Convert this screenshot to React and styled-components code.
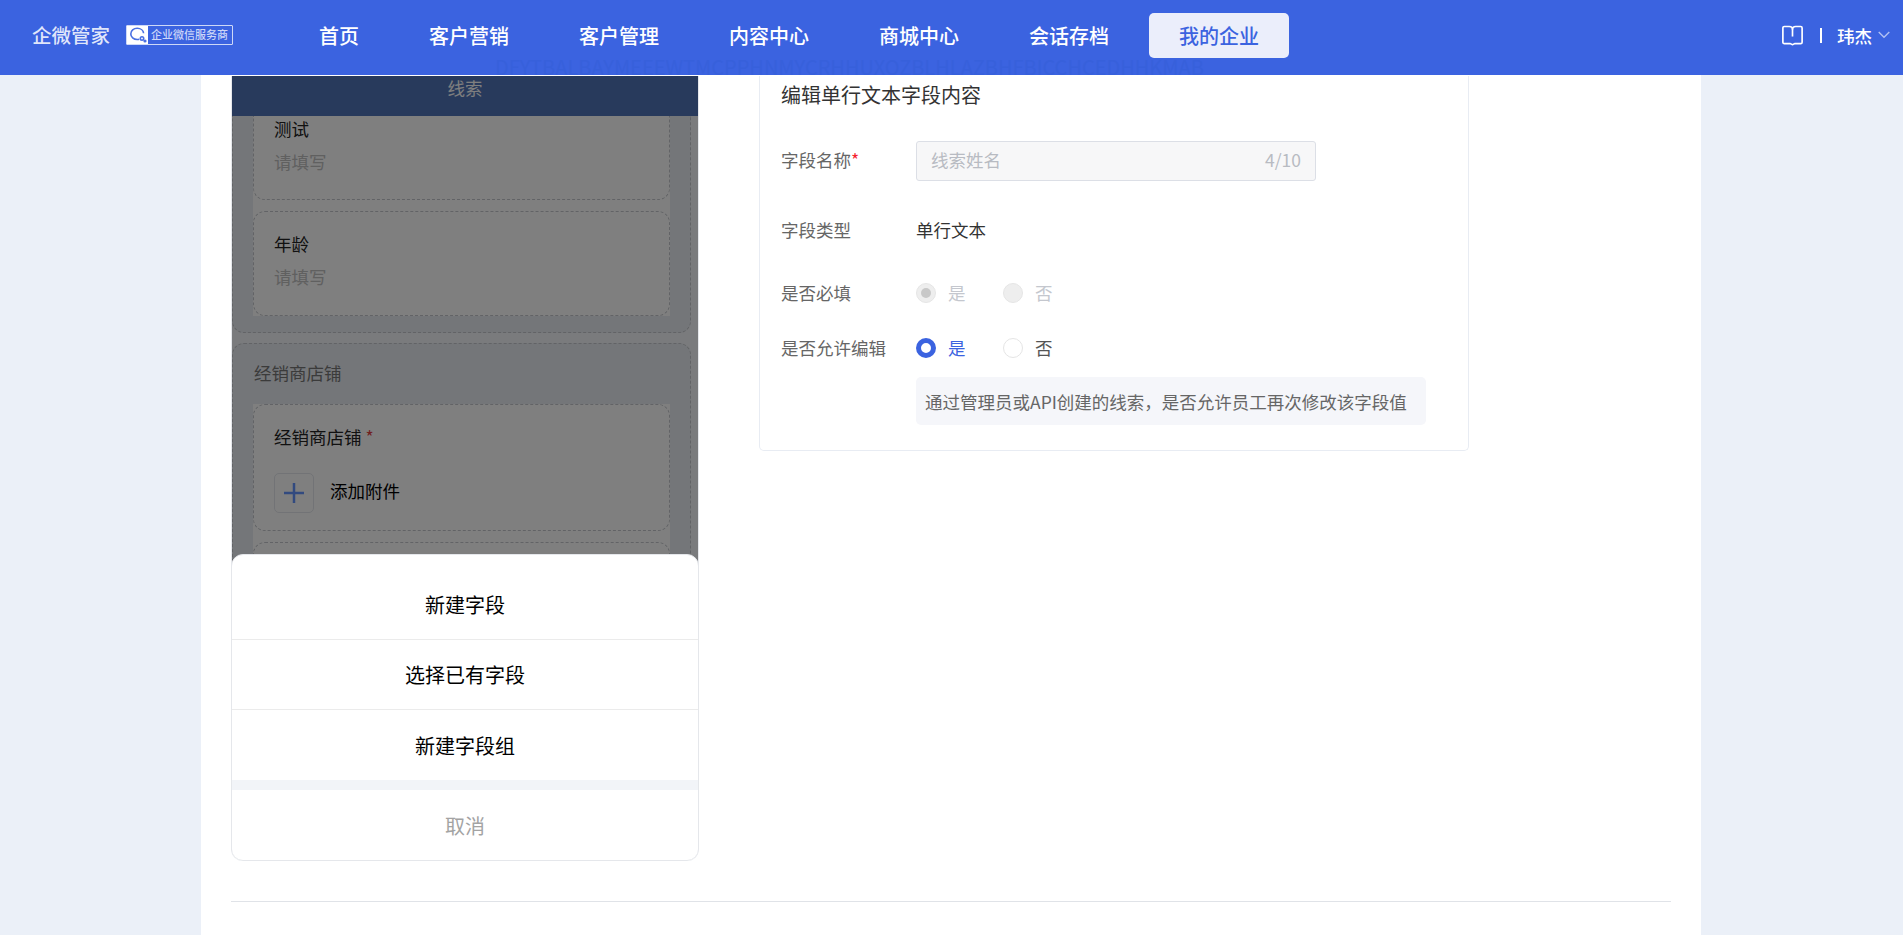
import React from "react";
import styled, { createGlobalStyle } from "styled-components";

const Global = createGlobalStyle`
  html, body { margin: 0; padding: 0; height: 100%; overflow: hidden; }
  body { background: #ebf0f8; font-family: "Noto Sans CJK SC", "Noto Sans", sans-serif; font-size: 17.5px; color: #333; }
  * { box-sizing: border-box; }
`;

const Header = styled.header`
  height: 75px; background: #3b63e0; display: flex; align-items: flex-start; position: relative; overflow: hidden;
`;
const Brand = styled.div`
  display: flex; align-items: center; height: 70px; padding-left: 32px; width: 289px; flex: none;
`;
const BrandName = styled.span`
  font-size: 19.5px; font-weight: 500; color: rgba(255,255,255,.85); line-height: 1; margin-right: 16px;
`;
const Badge = styled.div`
  display: flex; width: 107px; height: 20px; border: 1.5px solid rgba(255,255,255,.75); border-radius: 1px; overflow: hidden;
`;
const BadgeIcon = styled.div`
  width: 21px; background: #fff; display: flex; align-items: center; justify-content: center; flex: none;
`;
const BadgeText = styled.span`
  font-size: 11px; font-weight: 500; line-height: 17px; color: #ccd6f8; padding-left: 3px; white-space: nowrap;
`;
const Nav = styled.nav`
  display: flex; gap: 10px; padding-top: 13px;
`;
const NavItem = styled.a`
  height: 45px; padding: 0 30px; border-radius: 5px; display: flex; align-items: center; font-size: 20px; font-weight: 500;
  color: ${p => (p.$active ? "#3b63e0" : "#fff")};
  background: ${p => (p.$active ? "#ebeefb" : "transparent")};
`;
const UserArea = styled.div`
  margin-left: auto; display: flex; align-items: center; height: 70px; padding-right: 13px; color: #fff;
`;
const Sep = styled.i`
  width: 2px; height: 15px; background: #fff; margin: 0 15px 0 16px;
`;
const UserName = styled.span`
  font-size: 17.5px; font-weight: 500; margin-right: 6px;
`;
const Watermark = styled.div`
  position: absolute; left: 495px; top: 55px; font-size: 20px; line-height: 24px; color: #3760db; white-space: nowrap;
`;

const Main = styled.main`
  width: 1500px; margin: 0 auto 0 201px; height: 860px; background: #fff; padding: 1px 30px 0; overflow: hidden;
`;
const Columns = styled.div`
  display: flex; gap: 60px; height: 785px;
`;
const Phone = styled.section`
  position: relative; width: 468px; flex: none; height: 785px; background: #f4f6fa; border-left: 1px solid #e5e7eb; border-right: 1px solid #e5e7eb;
  border-radius: 0 0 12px 12px; overflow: hidden; display: flex; flex-direction: column;
`;
const PhoneTitle = styled.div`
  height: 40px; flex: none; margin: 0 -1px; background: #5074b8; color: #fff; text-align: center; font-size: 17.5px; line-height: 24px; position: relative; z-index: 1;
`;
const Scroller = styled.div`
  flex: 1; overflow: hidden; padding-right: 7px; display: flex; flex-direction: column; gap: 10px;
`;
const Group = styled.div`
  background: #e8ecf2; border: 1px dashed #c4c7cc; border-radius: 12px; padding: ${p => (p.$clipped ? "0 20px 16px" : "16px 20px 16px")};
  ${p => p.$clipped && "border-top: none; border-radius: 0 0 12px 12px;"}
`;
const GroupTitle = styled.div`
  font-size: 17.5px; line-height: 26px; color: #777; margin-bottom: 18px; padding-left: 1px;
`;
const Cards = styled.div`
  background: #fff; display: flex; flex-direction: column; gap: 11px;
`;
const Card = styled.div`
  background: #fff; border: 1px dashed #c4c7cc; border-radius: 12px; padding: ${p => `${p.$pt}px 20px 0`};
  height: ${p => p.$h}px;
  ${p => p.$clipped && "border-top: none; border-radius: 0 0 12px 12px;"}
`;
const FieldLabel = styled.div`
  font-size: 17.5px; line-height: 24px; color: #222;
`;
const Star = styled.span`
  color: #e3403f; margin-left: 4px;
`;
const Placeholder = styled.div`
  font-size: 17.5px; line-height: 24px; color: #c0c0c0; margin-top: 9px;
`;
const Upload = styled.div`
  display: flex; align-items: center; gap: 16px; margin-top: 24px; color: #000; line-height: 36px; height: 40px;
`;
const UploadText = styled.span`
  padding-bottom: 4px;
`;
const PlusBox = styled.div`
  width: 40px; height: 40px; border: 1px solid #e4e7ec; border-radius: 5px; display: flex; align-items: center; justify-content: center;
`;
const Overlay = styled.div`
  position: absolute; left: -1px; right: -1px; top: 0; bottom: 290px; background: rgba(0,0,0,.5); z-index: 2;
`;
const Sheet = styled.div`
  position: absolute; left: -1px; right: -1px; bottom: 0; height: 307px; background: #fff; z-index: 3; border: 1px solid #e5e7eb; border-radius: 12px;
  padding-top: 15px; display: flex; flex-direction: column;
`;
const SheetItem = styled.div`
  height: 70px; flex: none; display: flex; align-items: center; justify-content: center; font-size: 20px; color: #000;
  border-bottom: ${p => (p.$last ? "none" : "1px solid #ebebeb")};
`;
const SheetBand = styled.div`
  height: 10px; flex: none; background: #f2f4f8;
`;
const SheetCancel = styled.div`
  flex: 1; display: flex; align-items: center; justify-content: center; font-size: 20px; color: #a3a3a3;
`;

const EditCard = styled.section`
  width: 710px; flex: none; height: 375px; background: #fff; border: 1px solid #e8ecf3; border-top: none; border-radius: 0 0 5px 5px; padding: 0 21px;
`;
const EditTitle = styled.h2`
  margin: 0; font-size: 20px; font-weight: 400; line-height: 38px; color: #333;
`;
const Row = styled.div`
  display: flex; align-items: center; height: 40px; margin-top: ${p => p.$mt}px;
`;
const RowLabel = styled.div`
  width: 135px; flex: none; color: #666; font-size: 17.5px; padding-bottom: ${p => p.$lift * 2}px;
`;
const Req = styled.span`
  color: #f5222d;
`;
const InputBox = styled.div`
  width: 400px; height: 40px; background: #f7f7f8; border: 1px solid #dcdfe6; border-radius: 3px; display: flex; align-items: center; justify-content: space-between;
  padding: 0 14px 3px; color: #b8bbc2; font-size: 17.5px;
`;
const Value = styled.div`
  color: #333; font-size: 17.5px; padding-bottom: 4px;
`;
const RadioLabel = styled.label`
  display: flex; align-items: center; width: 87px; font-size: 17.5px;
  color: ${p => (p.$disabled ? "#c4c7ce" : p.$checked ? "#3b63e0" : "#555")};
`;
const RadioText = styled.span`
  padding-bottom: 2px;
`;
const RadioDot = styled.span`
  width: 20px; height: 20px; border-radius: 50%; margin-right: 12px; flex: none;
  display: flex; align-items: center; justify-content: center;
  background: ${p => (p.$disabled ? "#eeeeee" : "#fff")};
  border: ${p => (p.$disabled ? "1px solid #e6e6e6" : p.$checked ? "5px solid #3b63e0" : "1px solid #e5e5e5")};
  &::after {
    content: ""; width: 10px; height: 10px; border-radius: 50%;
    background: ${p => (p.$disabled && p.$checked ? "#c8c8c8" : "transparent")};
  }
`;
const Note = styled.div`
  margin: 9px 0 0 135px; width: 510px; height: 48px; background: #f5f6fa; border-radius: 5px; padding: 0 9px; display: flex; align-items: center; font-size: 17.5px; white-space: nowrap; color: #666;
`;
const Divider = styled.hr`
  margin: 40px 0 0; border: none; border-top: 1px solid #e0e3e8;
`;

const LogoIcon = () => (
  <svg width="18" height="16" viewBox="0 0 18 16" fill="none" stroke="#4a70e2" strokeWidth="1.6">
    <path d="M10.2 12.2c-.6.2-1.3.3-2 .3-3.6 0-6.4-2.5-6.4-5.6S4.6 1.3 8.2 1.3s6.2 2.2 6.4 5" />
    <circle cx="13" cy="11.4" r="1.7" />
    <circle cx="16" cy="14" r=".8" />
  </svg>
);
const BookIcon = () => (
  <svg width="23" height="21" viewBox="0 0 22 20" fill="none" stroke="#fff" strokeWidth="1.6" strokeLinejoin="round">
    <path d="M1.8 2.8c0-.8.6-1.4 1.4-1.4H8c1.6 0 3 1 3 2.6 0-1.6 1.4-2.6 3-2.6h4.8c.8 0 1.4.6 1.4 1.4v13.6c0 .8-.6 1.4-1.4 1.4h-5.6c-.8 0-1.4.9-2.2.9s-1.4-.9-2.2-.9H3.2c-.8 0-1.4-.6-1.4-1.4z" />
    <path d="M11 4v7" />
  </svg>
);
const Chevron = () => (
  <svg width="12" height="8" viewBox="0 0 12 8" fill="none" stroke="rgba(255,255,255,.6)" strokeWidth="1.4">
    <path d="M.7 1l5.3 5.3L11.3 1" />
  </svg>
);
const Plus = () => (
  <svg width="20" height="20" viewBox="0 0 20 20" fill="none" stroke="#6494ff" strokeWidth="2.5">
    <path d="M10 0v20M0 10h20" />
  </svg>
);

const navItems = ["首页", "客户营销", "客户管理", "内容中心", "商城中心", "会话存档"];

const Radio = ({ checked, disabled, children }) => (
  <RadioLabel $checked={checked} $disabled={disabled}>
    <RadioDot $checked={checked} $disabled={disabled} />
    <RadioText>{children}</RadioText>
  </RadioLabel>
);

export default function App() {
  return (
    <>
      <Global />
      <Header>
        <Brand>
          <BrandName>企微管家</BrandName>
          <Badge>
            <BadgeIcon><LogoIcon /></BadgeIcon>
            <BadgeText>企业微信服务商</BadgeText>
          </Badge>
        </Brand>
        <Nav>
          {navItems.map(n => <NavItem key={n}>{n}</NavItem>)}
          <NavItem $active>我的企业</NavItem>
        </Nav>
        <UserArea>
          <BookIcon />
          <Sep />
          <UserName>玮杰</UserName>
          <Chevron />
        </UserArea>
        <Watermark>DFYTBALBAYMEEEWTMCPPHNMYCRHHUXOZBLHLAZBHFBICCHCEDHHKMAB</Watermark>
      </Header>
      <Main>
        <Columns>
          <Phone>
            <PhoneTitle>线索</PhoneTitle>
            <Scroller>
              <Group $clipped>
                <Cards>
                  <Card $clipped $h={84} $pt={1}>
                    <FieldLabel>测试</FieldLabel>
                    <Placeholder>请填写</Placeholder>
                  </Card>
                  <Card $h={105} $pt={20}>
                    <FieldLabel>年龄</FieldLabel>
                    <Placeholder>请填写</Placeholder>
                  </Card>
                </Cards>
              </Group>
              <Group>
                <GroupTitle>经销商店铺</GroupTitle>
                <Cards>
                  <Card $h={127} $pt={20}>
                    <FieldLabel>经销商店铺<Star>*</Star></FieldLabel>
                    <Upload>
                      <PlusBox><Plus /></PlusBox>
                      <UploadText>添加附件</UploadText>
                    </Upload>
                  </Card>
                  <Card $h={105} $pt={20} />
                </Cards>
              </Group>
            </Scroller>
            <Overlay />
            <Sheet>
              <SheetItem>新建字段</SheetItem>
              <SheetItem>选择已有字段</SheetItem>
              <SheetItem $last>新建字段组</SheetItem>
              <SheetBand />
              <SheetCancel>取消</SheetCancel>
            </Sheet>
          </Phone>
          <EditCard>
            <EditTitle>编辑单行文本字段内容</EditTitle>
            <Row $mt={27}>
              <RowLabel $lift={2}>字段名称<Req>*</Req></RowLabel>
              <InputBox><span>线索姓名</span><span>4/10</span></InputBox>
            </Row>
            <Row $mt={30}>
              <RowLabel $lift={2}>字段类型</RowLabel>
              <Value>单行文本</Value>
            </Row>
            <Row $mt={22}>
              <RowLabel $lift={1}>是否必填</RowLabel>
              <Radio checked disabled>是</Radio>
              <Radio disabled>否</Radio>
            </Row>
            <Row $mt={15}>
              <RowLabel $lift={1}>是否允许编辑</RowLabel>
              <Radio checked>是</Radio>
              <Radio>否</Radio>
            </Row>
            <Note>通过管理员或API创建的线索，是否允许员工再次修改该字段值</Note>
          </EditCard>
        </Columns>
        <Divider />
      </Main>
    </>
  );
}
